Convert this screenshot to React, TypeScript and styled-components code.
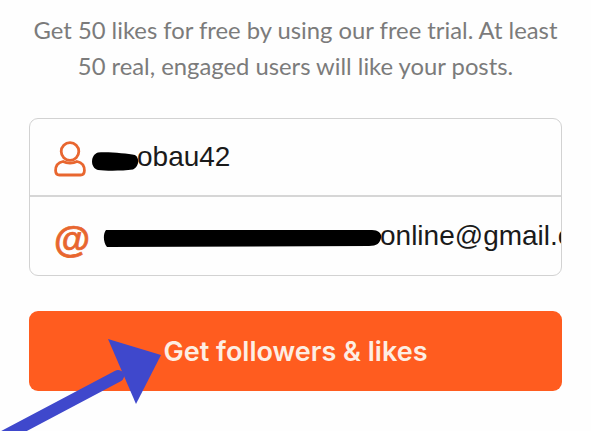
import React from "react";
import styled, { createGlobalStyle } from "styled-components";

const GlobalStyle = createGlobalStyle`
  html, body {
    margin: 0;
    padding: 0;
    background: #fefefe;
  }
`;

export default function App() {
  return (
    <Page>
      <GlobalStyle />
      <Intro>
        Get 50 likes for free by using our free trial. At least
        <br />
        50 real, engaged users will like your posts.
      </Intro>
      <Card>
        <Field>
          <IconSlot>
            <PersonIcon width="32" height="36" viewBox="0 0 32 36" fill="none" stroke="#e8662f" strokeWidth="2.8">
              <circle cx="16" cy="10.5" r="8.8" />
              <path d="M9 20.5 C4 21.5 1.6 25 1.6 29.5 C1.6 32.4 3 34 5.5 34 H26.5 C29 34 30.4 32.4 30.4 29.5 C30.4 25 28 21.5 23 20.5 C19 22.6 13 22.6 9 20.5 Z" />
            </PersonIcon>
          </IconSlot>
          <Value $offset={-1}>
            <Blob $drop={8} width="49" height="19" viewBox="0 0 49 19">
              <path d="M8 0.5 C18 -0.5 37 1.5 45 3 C50 6 49 15 43 17.5 C32 19 16 19 8 18 C0 16 0 3 8 0.5 Z" fill="#000" />
            </Blob>
            <Trailing>obau42</Trailing>
          </Value>
        </Field>
        <Field>
          <IconSlot>
            <AtSign>@</AtSign>
          </IconSlot>
          <Value $offset={12}>
            <Blob $drop={4} width="279" height="19" viewBox="0 0 279 19">
              <path d="M3 1 H269 C276 1 279 5 278 9 C277 14 274 17 266 17 L4 18 C0 13 0 5 3 1 Z" fill="#000" />
            </Blob>
            <Trailing>online@gmail.com</Trailing>
          </Value>
        </Field>
      </Card>
      <Submit>Get followers &amp; likes</Submit>
      <Arrow width="591" height="431" viewBox="0 0 591 431">
        <path d="M118 376 L-20 449" stroke="#3f48cc" strokeWidth="12" strokeLinecap="round" />
        <polygon points="108,339 161,355 136,404" fill="#3f48cc" />
      </Arrow>
    </Page>
  );
}

const Page = styled.div`
  position: relative;
  width: 591px;
  height: 431px;
  overflow: hidden;
  box-sizing: border-box;
  padding: 12px 29px 0;
  display: flex;
  flex-direction: column;
  background: #fefefe;
`;

const Intro = styled.p`
  margin: 0 0 34px;
  font-family: "Lato", sans-serif;
  font-size: 23.8px;
  line-height: 36px;
  text-align: center;
  color: #7b7b7b;
  white-space: nowrap;
`;

const Card = styled.div`
  height: 158px;
  box-sizing: border-box;
  border: 1px solid #d2d2d2;
  border-radius: 9px;
  display: flex;
  flex-direction: column;
  margin-bottom: 35px;
  overflow: hidden;
`;

const Field = styled.div`
  flex: 1;
  min-height: 0;
  display: flex;
  align-items: center;
  padding-left: 24px;
  &:first-child {
    flex: 0 0 76px;
  }
  & + & {
    border-top: 2px solid #d6d6d6;
  }
`;

const IconSlot = styled.div`
  width: 37px;
  flex: none;
  display: flex;
  align-items: center;
`;

const PersonIcon = styled.svg`
  margin-top: 4px;
`;

const AtSign = styled.span`
  font-family: "Liberation Sans", sans-serif;
  font-weight: 700;
  font-size: 37px;
  line-height: 40px;
  color: #e8662f;
  -webkit-text-stroke: 0.7px #e8662f;
  margin-top: 8px;
`;

const Value = styled.div<{ $offset: number }>`
  display: flex;
  align-items: center;
  margin-left: ${(p) => p.$offset}px;
  font-family: "Liberation Sans", sans-serif;
  font-size: 28px;
  color: #1a1a1a;
  white-space: nowrap;
`;

const Blob = styled.svg<{ $drop: number }>`
  flex: none;
  display: block;
  margin-top: ${(p) => p.$drop}px;
`;

const Trailing = styled.span`
  margin-left: -2px;
`;

const Submit = styled.button`
  height: 80px;
  border: none;
  border-radius: 9px;
  background: #ff5c1f;
  color: #fdeee3;
  font-family: "Inter", sans-serif;
  font-size: 27px;
  font-weight: 600;
  padding: 0;
`;

const Arrow = styled.svg`
  position: absolute;
  left: 0;
  top: 0;
  pointer-events: none;
`;
